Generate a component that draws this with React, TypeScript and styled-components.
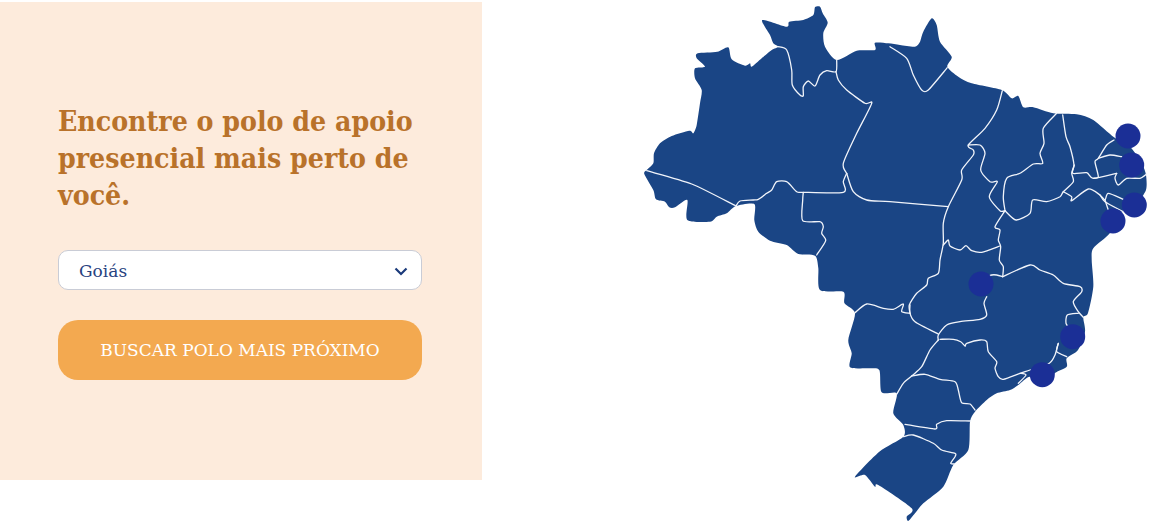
import { createGlobalStyle, styled } from "styled-components";

const outline =
  "644.3,174 646.7,170 653.3,163.3 654,153.3 660,143.3 671.7,136 689.3,130.7 693.3,133.3 696.7,125 700,103.3 701.7,90 695,78.3 695,68.3 705,66.7 696.7,58.3 697.7,53.3 717.3,51.7 728.3,47.3 731.7,59.3 745,65.7 750,63.3 751.7,66.7 761.7,58.3 771.7,50 778.3,46.7 773.3,43.3 770,35 762.3,20 786.7,26.7 789.3,21.7 803.3,20 813.3,15 815,7.3 820,6.7 822.7,13.3 827.7,22.7 823.3,33.3 825,46.7 836.7,60 856.7,50.7 875,50 875,42.7 888.3,43.3 900,45 915,46.7 920,41.7 923.3,31.7 931.7,18.3 936.7,25 940,41.7 951.7,56.7 947.3,66.7 958.3,76.7 971.7,83.3 1001.7,90 1011.7,98.3 1018.3,96 1023.3,107.3 1033.3,107.3 1053.3,113.3 1076.7,114.3 1093.3,120 1114,137.3 1130,146.7 1141.7,163.3 1146,175 1146,190 1136.7,203 1120,213 1110,233 1093.3,248.3 1091.7,260 1093.3,286.7 1088,313 1083.3,317.3 1085,331.7 1078,350 1066.7,358.3 1066.7,366.7 1055,373 1043,386.7 1030,376.7 1018.3,385 1010,390 996.7,393.3 986.7,400 975,411.7 970,421.7 968.3,450 953.3,465 943.3,486.7 923.3,503.3 915,513.3 908.3,521 906.7,516.7 911.7,508.3 878.3,485 875,486.7 865,475 855,476.7 879.3,451.7 903.3,436.7 903.3,425 893.3,413.3 896.7,393.3 881.7,392.3 879.3,370 868.3,368.3 850,367.3 851.7,353.3 848.3,340 855,313.3 844.5,303.3 843.3,291.7 820,290 818.3,268 815,255.7 798.3,254 786.7,245 770,240.7 758.3,231.7 754.3,220 754.3,204 736,206 726.7,213.3 716.7,216.7 710,221.7 687.3,220 687.3,200 675,207.3 669.3,207.3 665,201.7 656,199.3 653.3,190";

const borders = [
  "646.7,170.7 691.7,184 736,206",
  "736,206 740,201 753.3,200 758.3,199.3 766.7,193.3 771.7,190 776.7,181.7 786.7,181.7 796.7,191.7 803.3,192.3 843.3,192.3 843.3,181.7 846.7,173.3",
  "846.7,173.3 843.3,163.3 856.7,133.3 871.7,103.3 865,103.3 846.7,90 838.3,80 836,71.7",
  "778.3,46.7 786.7,50 791.7,70 792.3,85 800,95 803.3,95.7 803.3,86.7 808.3,81 815,86 820,75 826.7,70.7 836,71.7 836.7,60",
  "803.3,192.3 802.7,200 802.7,220.7 820,221.7 823.3,226.7 821.7,233.3 825.7,240.7 816.7,255",
  "846.7,173.3 853.3,191.7 866.7,200 890,201.7 948.3,206.7",
  "890,46.7 906.7,58.3 913.3,75 921.7,90 928.3,90 947.3,67.7",
  "1002.3,90.7 996.7,110 985,128.3 968.3,145 973.3,150 973.3,155 961.7,170 961.7,180 948.3,206.7 943.3,223.3 943.3,243.3 940,260 938.3,273.3 928.3,278.3 926.7,285 916.7,293.3 909.3,305 910,313.3",
  "943.3,245 948.3,240 950,246 960,250 966,245.7 971.7,250.7 981.7,252.3 1000,246",
  "968.3,145 980,145 985,153.3 980.7,170 990,181.7 997.3,181.7 989.3,196.7 1000,210.7 1005,210.7",
  "1005,210.7 995,226.7 1000,230 998.3,240 1000.7,246.7 999.3,260 1003.3,266.7 1002.7,276.7",
  "1002.7,276.7 1030,265 1040,270 1053.3,275 1063.3,283.3 1080,286.7 1081.7,291.7 1073.3,301.7 1078.3,311.7 1083.3,317.3",
  "1078.3,313.3 1067.3,315 1066,323.3 1070,328.3",
  "1058.3,343.3 1056.7,351.7 1066.7,356.7",
  "1058.3,343.3 1055,355 1049.3,363.3 1030,370 1020,373.3 1003.3,379.3 998.3,376.7 995,368.3 996.7,361.7 988.3,351.7 986.7,341.7 980,340 966.7,343.3 965,346 960.7,341.7 953.3,339.3 940,339.3",
  "1020,373.3 1026,375 1018.3,383.3",
  "986.7,296.7 984,303.3 986.7,315 980,319.3 960,321.7 946.7,325 938.3,335 938.3,340",
  "1002.7,276.7 996.7,275 991.7,275 985,278",
  "910,305 910,313.3 915,321.7 938.3,334",
  "855,312.7 866.7,304 883.3,308.3 893.3,309.3 903.3,304 901.7,311.7 910,313.3",
  "938.3,340 930,350 921.7,366.7 911.7,376 903.3,383.3 896.7,394.3",
  "911.7,376 925,374.3 940,379.3 955,381.7 958.3,390 961.7,402.7 970,404 975,410",
  "905,424.3 935,429 936.7,424.3 946.7,420.7 970.7,421",
  "903.3,436.7 913.3,435 933.3,443.3 941.7,450 955,453.3 955,456.7 950.7,463.3 954.3,464",
  "1056.7,113.3 1043.3,128.3 1044,143.3 1040,153.3 1042.7,163.3 1033.3,164 1020,173.3 1006.7,178.3 1003.3,196.7 1005,210.7",
  "1005,210.7 1016,220 1030,213.3 1032.7,200 1046.7,201.7 1060,196.7 1063.3,191.7 1073.3,181.7 1071.7,173.3 1074.3,165",
  "1062.7,115 1066,136.7 1070,146.7 1074,165 1072.7,173.3 1086.7,172.7 1093.3,178.3 1116.7,173.3",
  "1063.3,191.7 1071.7,196.7 1071.7,200.7 1088.3,189 1100,195 1105,200 1108.3,193.3 1123.3,199.3",
  "1100,195 1105,201.7 1123.3,211.7",
  "1105,200 1108.3,210",
  "1114,140 1106.7,145 1098.3,158.3 1095,161.7 1098.3,176.7 1093.3,178.3",
  "1098.3,158.3 1110,155 1121.7,156.7",
  "1116.7,173.3 1115,178.3 1118.3,185 1126.7,178.3 1140,178.3 1146.7,174",
];

const polos = [
  { x: 1128, y: 136 },
  { x: 1131.7, y: 165 },
  { x: 1134.3, y: 205 },
  { x: 1113, y: 221 },
  { x: 981, y: 284 },
  { x: 1072.7, y: 336.7 },
  { x: 1042.3, y: 374.7 },
];

const estados = ["Bahia", "Goiás", "Minas Gerais", "Rio de Janeiro"];

// rounds the hand-traced points so the borders don't look like straight segments
const smoothPath = (points: string, closed = false) => {
  const pts = points.split(" ").map((p) => p.split(",").map(Number));
  const at = (i: number) =>
    closed ? pts[(i + pts.length) % pts.length] : pts[Math.max(0, Math.min(pts.length - 1, i))];
  const last = closed ? pts.length : pts.length - 1;
  let d = `M${pts[0][0]} ${pts[0][1]}`;
  for (let i = 0; i < last; i++) {
    const [p0, p1, p2, p3] = [at(i - 1), at(i), at(i + 1), at(i + 2)];
    const c1x = (p1[0] + (p2[0] - p0[0]) / 8).toFixed(1);
    const c1y = (p1[1] + (p2[1] - p0[1]) / 8).toFixed(1);
    const c2x = (p2[0] - (p3[0] - p1[0]) / 8).toFixed(1);
    const c2y = (p2[1] - (p3[1] - p1[1]) / 8).toFixed(1);
    d += `C${c1x} ${c1y} ${c2x} ${c2y} ${p2[0]} ${p2[1]}`;
  }
  return closed ? d + "Z" : d;
};

const App = () => {
  return (
    <Page>
      <GlobalStyle />
      <SearchPanel>
        <Title>Encontre o polo de apoio presencial mais perto de você.</Title>
        <SelectBox>
          <StateSelect defaultValue="Goiás">
            {estados.map((estado) => (
              <option key={estado}>{estado}</option>
            ))}
          </StateSelect>
          <Chevron viewBox="0 0 14 9">
            <path d="M1.5 1.5 7 7l5.5-5.5" />
          </Chevron>
        </SelectBox>
        <SearchButton>BUSCAR POLO MAIS PRÓXIMO</SearchButton>
      </SearchPanel>
      <MapSvg viewBox="640 0 511 522">
        <path d={smoothPath(outline, true)} fill="#1a4585" />
        {borders.map((points) => (
          <path
            key={points}
            d={smoothPath(points)}
            fill="none"
            stroke="#f1f4fa"
            strokeWidth="1.3"
            strokeLinecap="round"
          />
        ))}
        {polos.map((polo) => (
          <circle key={polo.x} cx={polo.x} cy={polo.y} r="12.5" fill="#1b2f96" />
        ))}
      </MapSvg>
    </Page>
  );
};

export default App;

const GlobalStyle = createGlobalStyle`
  body {
    margin: 0;
    background: #fff;
    font-family: "DejaVu Serif", "Liberation Serif", serif;
  }
`;

const Page = styled.div`
  display: flex;
  align-items: flex-start;
  width: 1151px;
  height: 522px;
  overflow: hidden;
`;

const SearchPanel = styled.section`
  display: flex;
  flex-direction: column;
  justify-content: center;
  box-sizing: border-box;
  width: 482px;
  height: 478px;
  margin-top: 2px;
  padding: 0 50px 0 58px;
  background: #fdebdc;
`;

const Title = styled.h2`
  margin: 0 0 36px;
  font-size: 28.2px;
  line-height: 37px;
  font-weight: 700;
  font-stretch: condensed;
  color: #b9722a;
`;

const SelectBox = styled.div`
  position: relative;
  width: 364px;
  height: 40px;
  margin-bottom: 30px;
`;

const StateSelect = styled.select`
  appearance: none;
  box-sizing: border-box;
  width: 100%;
  height: 100%;
  padding: 2px 40px 0 20px;
  border: 1px solid #c9ccd6;
  border-radius: 10px;
  background: #fff;
  font-family: inherit;
  font-size: 17px;
  color: #27427f;
`;

const Chevron = styled.svg`
  position: absolute;
  top: 17px;
  right: 14px;
  width: 14px;
  height: 9px;
  fill: none;
  stroke: #1a3a7a;
  stroke-width: 2.2;
`;

const SearchButton = styled.button`
  width: 364px;
  height: 60px;
  padding: 0;
  border: 0;
  border-radius: 20px;
  background: #f3a950;
  font-family: inherit;
  font-size: 17px;
  color: #fff;
`;

const MapSvg = styled.svg`
  display: block;
  flex: none;
  width: 511px;
  height: 522px;
  margin-left: auto;
`;
